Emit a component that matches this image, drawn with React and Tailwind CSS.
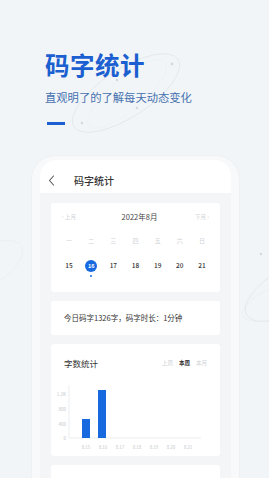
import React from 'react';

const font = { fontFamily: '"Noto Sans CJK SC", "Noto Sans", sans-serif' };

const weekdays = ['一', '二', '三', '四', '五', '六', '日'];
const dates = [15, 16, 17, 18, 19, 20, 21];
const xLabels = ['8.15', '8.16', '8.17', '8.18', '8.19', '8.20', '8.21'];

const Orbits = () => (
  <svg className="absolute inset-0 pointer-events-none" width="269" height="478" viewBox="0 0 269 478" fill="none">
    <ellipse cx="126" cy="93" rx="62" ry="24" transform="rotate(-33 126 93)" stroke="#e2e6ea" strokeWidth="0.8" />
    <ellipse cx="127" cy="94" rx="50" ry="16" transform="rotate(-40 127 94)" stroke="#eceff2" strokeWidth="0.6" />
    <circle cx="172" cy="64" r="1.4" fill="#d5d9de" />
    <circle cx="117" cy="80" r="1.2" fill="#d5d9de" />
    <circle cx="137" cy="108" r="1.2" fill="#d5d9de" />
    <circle cx="82" cy="123" r="1.3" fill="#d5d9de" />
    <ellipse cx="290" cy="290" rx="50" ry="22" transform="rotate(-30 290 290)" stroke="#e2e6ea" strokeWidth="0.8" />
    <ellipse cx="285" cy="300" rx="45" ry="16" transform="rotate(-20 285 300)" stroke="#eaedf0" strokeWidth="0.6" />
    <circle cx="261" cy="254" r="1.3" fill="#d5d9de" />
    <ellipse cx="-20" cy="270" rx="48" ry="20" transform="rotate(-30 -20 270)" stroke="#eaedf0" strokeWidth="0.6" />
  </svg>
);

const Chart = () => (
  <svg width="166" height="74" viewBox="0 0 166 74" fill="none">
    <line x1="18" y1="4" x2="18" y2="57" stroke="#e6e8eb" strokeWidth="0.8" />
    <line x1="18" y1="57" x2="150" y2="57" stroke="#e6e8eb" strokeWidth="0.8" />
    {[['1.2K', 13], ['800', 28], ['400', 43], ['0', 57]].map(([t, y]) => (
      <text key={t} x="15" y={y + 1.5} textAnchor="end" fontSize="4.5" fill="#c4c7cb" style={font}>{t}</text>
    ))}
    <rect x="31" y="38" width="8" height="19" fill="#1769e0" />
    <rect x="47" y="9" width="8" height="48" fill="#1769e0" />
    {xLabels.map((t, i) => (
      <text key={t} x={35 + i * 17} y="68" textAnchor="middle" fontSize="4.5" fill="#c4c7cb" style={font}>{t}</text>
    ))}
  </svg>
);

export default function App() {
  return (
    <div className="relative w-[269px] h-[478px] overflow-hidden bg-[#f2f5f7]" style={font}>
      <Orbits />
      <div className="relative flex flex-col">
        {/* heading */}
        <div className="pl-[45px] pt-[51px]">
          <div className="text-[24.5px] leading-[28px] font-bold text-[#1b5fd0] tracking-[0.5px]">码字统计</div>
          <div className="mt-[11px] text-[11.3px] leading-[14px] text-[#4571b0]">直观明了的了解每天动态变化</div>
          <div className="mt-[18px] ml-[2px] w-[18px] h-[3px] bg-[#1b5fd0]" />
        </div>

        {/* phone frame */}
        <div className="mt-[30px] ml-[31px] w-[209px] h-[330px] rounded-t-[24px] bg-[#f8f9fa] border border-[#eef0f2] pt-[4px] px-[8px]">
          <div className="h-full rounded-t-[16px] bg-[#f4f5f7] overflow-hidden">
            {/* header */}
            <div className="h-[33px] bg-white flex items-center pl-[8px] pt-[7px]">
              <svg width="7" height="11" viewBox="0 0 7 11" fill="none">
                <path d="M5.5 1 L1.5 5.5 L5.5 10" stroke="#555" strokeWidth="1.1" strokeLinecap="round" strokeLinejoin="round" />
              </svg>
              <span className="ml-[19px] text-[10px] font-medium text-[#333]">码字统计</span>
            </div>

            <div className="px-[11px] pt-[10px] flex flex-col gap-[9px]">
              {/* calendar */}
              <div className="bg-white rounded-[3px] h-[89px] px-[7px] pt-[9px]">
                <div className="flex items-center justify-between px-[4px] h-[10px]">
                  <span className="text-[5.5px] text-[#cfd2d6]">‹ 上月</span>
                  <span className="text-[7.5px] text-[#444] pl-[8px]">2022年8月</span>
                  <span className="text-[5.5px] text-[#cfd2d6]">下月 ›</span>
                </div>
                <div className="grid grid-cols-7 mt-[13px] h-[10px] items-center">
                  {weekdays.map((d) => (
                    <span key={d} className="text-center text-[6px] text-[#cfd2d6]">{d}</span>
                  ))}
                </div>
                <div className="grid grid-cols-7 mt-[15px] items-start">
                  {dates.map((d) => (
                    <div key={d} className="flex flex-col items-center">
                      {d === 16 ? (
                        <>
                          <span className="w-[12px] h-[12px] rounded-full bg-[#1769e0] text-white text-[5.5px] font-bold flex items-center justify-center">{d}</span>
                          <span className="mt-[3px] w-[2px] h-[2px] rounded-full bg-[#1769e0]" />
                        </>
                      ) : (
                        <span className="h-[12px] flex items-center text-[6.5px] font-medium text-[#333]">{d}</span>
                      )}
                    </div>
                  ))}
                </div>
              </div>

              {/* today summary */}
              <div className="bg-white rounded-[3px] h-[34px] flex items-center px-[13px]">
                <span className="text-[7.5px] text-[#333]">今日码字1326字，码字时长：1分钟</span>
              </div>

              {/* chart card */}
              <div className="bg-white rounded-[3px] h-[112px] pt-[13px]">
                <div className="flex items-center justify-between px-[13px] h-[12px]">
                  <span className="text-[8.5px] text-[#333]">字数统计</span>
                  <div className="flex gap-[6px] text-[5.5px]">
                    <span className="text-[#cfd2d6]">上周</span>
                    <span className="text-[#333] font-bold">本周</span>
                    <span className="text-[#cfd2d6]">本月</span>
                  </div>
                </div>
                <div className="mt-[12px]">
                  <Chart />
                </div>
              </div>

              <div className="bg-white rounded-[3px] h-[40px]" />
            </div>
          </div>
        </div>
      </div>
    </div>
  );
}
